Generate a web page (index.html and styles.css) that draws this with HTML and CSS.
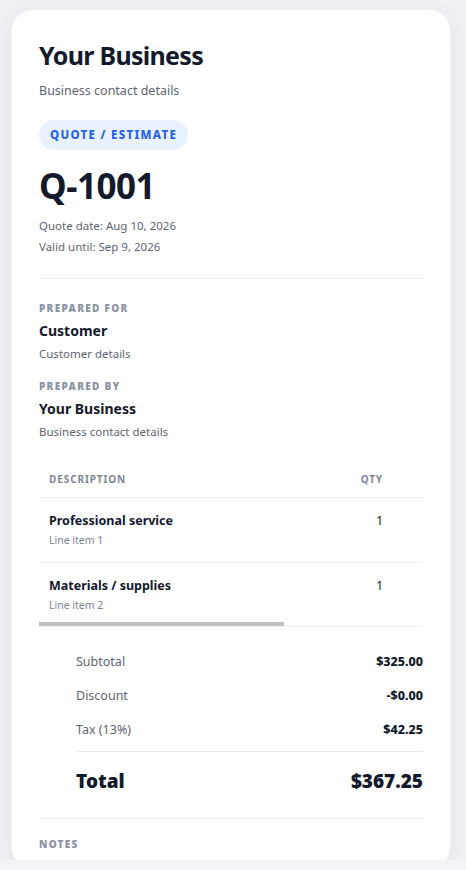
FILE: index.html
```html
<!DOCTYPE html>
<html lang="en">
<head>
    <meta charset="UTF-8">
    <meta name="viewport" content="width=device-width, initial-scale=1.0">
    <title>Quote Q-1001</title>
    <link rel="stylesheet" href="styles.css">
</head>
<body>
    <div class="page">
        <div class="sheet">
            <h1 class="biz-name">Your Business</h1>
            <p class="muted biz-contact">Business contact details</p>

            <span class="badge">Quote / Estimate</span>

            <div class="doc-number">Q-1001</div>
            <p class="meta">Quote date: Aug 10, 2026</p>
            <p class="meta">Valid until: Sep 9, 2026</p>

            <hr class="rule">

            <div class="party">
                <div class="label">Prepared for</div>
                <div class="party-name">Customer</div>
                <div class="muted small">Customer details</div>
            </div>
            <div class="party party-by">
                <div class="label">Prepared by</div>
                <div class="party-name">Your Business</div>
                <div class="muted small">Business contact details</div>
            </div>

            <div class="table-wrap">
                <table class="items">
                    <colgroup>
                        <col class="col-desc">
                        <col class="col-qty">
                        <col class="col-rest">
                    </colgroup>
                    <thead>
                        <tr>
                            <th>Description</th>
                            <th class="num">Qty</th>
                            <th></th>
                        </tr>
                    </thead>
                    <tbody>
                        <tr>
                            <td>
                                <div class="item-name">Professional service</div>
                                <div class="item-note">Line item 1</div>
                            </td>
                            <td class="num">1</td>
                            <td></td>
                        </tr>
                        <tr class="last">
                            <td>
                                <div class="item-name">Materials / supplies</div>
                                <div class="item-note">Line item 2</div>
                            </td>
                            <td class="num">1</td>
                            <td></td>
                        </tr>
                    </tbody>
                </table>
                <!-- horizontal scroll indicator, table is wider than the card -->
                <div class="scroll-track"><div class="scroll-thumb"></div></div>
            </div>

            <div class="totals">
                <div class="total-row"><span>Subtotal</span><b>$325.00</b></div>
                <div class="total-row"><span>Discount</span><b>-$0.00</b></div>
                <div class="total-row"><span>Tax (13%)</span><b>$42.25</b></div>
                <div class="grand-total"><span>Total</span><span>$367.25</span></div>
            </div>

            <hr class="rule notes-rule">
            <div class="label notes-label">Notes</div>
        </div>
    </div>
    <div class="bottom-bar"></div>
</body>
</html>
```

FILE: styles.css
```css
body {
    margin: 0;
    background: #eef0f4;
    font-family: "Noto Sans", "Open Sans", sans-serif;
    color: #131a2b;
}
.page {
    padding: 9px 15px 0 11px;
}
.sheet {
    background: #fff;
    border-radius: 22px;
    border: 1px solid #f0f1f4;
    box-shadow: 0 4px 18px rgba(15, 23, 42, 0.05);
    padding: 29px 27px 16px;
}
p {
    margin: 0;
}
.biz-name {
    margin: 0;
    font-size: 25px;
    line-height: 32px;
    font-weight: 700;
    letter-spacing: -0.7px;
}
.muted {
    color: #5e6574;
}
.biz-contact {
    margin-top: 10px;
    font-size: 12.5px;
    line-height: 20px;
}
.badge {
    display: inline-block;
    margin-top: 19px;
    height: 30px;
    line-height: 30px;
    padding: 0 11px;
    border-radius: 15px;
    background: #eaf1fe;
    color: #2563eb;
    font-size: 11.5px;
    font-weight: 800;
    letter-spacing: 1.3px;
    text-transform: uppercase;
}
.doc-number {
    margin-top: 14px;
    font-size: 35px;
    line-height: 44px;
    font-weight: 700;
    letter-spacing: -0.5px;
}
.meta {
    font-size: 11.5px;
    line-height: 21px;
    color: #5e6574;
}
.doc-number + .meta {
    margin-top: 7px;
}
.rule {
    border: 0;
    border-top: 1.5px solid #eef0f3;
    margin: 21px 0 0;
}
.party {
    margin-top: 21px;
}
.party-by {
    margin-top: 15px;
}
.label {
    font-size: 10px;
    line-height: 16px;
    font-weight: 900;
    letter-spacing: 1.3px;
    text-transform: uppercase;
    color: #8a93a4;
}
.party-name {
    margin-top: 5px;
    font-size: 14px;
    line-height: 20px;
    font-weight: 700;
}
.small {
    margin-top: 4px;
    font-size: 11.5px;
    line-height: 18px;
}
.table-wrap {
    margin-top: 20px;
}
.items {
    width: 100%;
    table-layout: fixed;
    border-collapse: collapse;
}
.col-desc {
    width: 294px;
}
.col-qty {
    width: 60px;
}
.items th {
    height: 36px;
    padding: 0 10px;
    text-align: left;
    font-size: 10px;
    font-weight: 700;
    letter-spacing: 0.9px;
    text-transform: uppercase;
    color: #7d8696;
    border-bottom: 1.5px solid #eef0f3;
}
.items td {
    padding: 14px 10px 14px;
    vertical-align: top;
    font-size: 12px;
    line-height: 18px;
    border-bottom: 1px solid #f1f2f5;
}
.items .last td {
    border-bottom: 0;
}
.items .num {
    text-align: right;
}
.item-name {
    font-size: 12.5px;
    font-weight: 700;
}
.item-note {
    margin-top: 2px;
    font-size: 10.5px;
    line-height: 16px;
    color: #7d8493;
}
.scroll-track {
    height: 4px;
    margin-top: -5px;
    border-bottom: 1px solid #f1f2f5;
}
.scroll-thumb {
    width: 245px;
    height: 4px;
    background: #c1c1c1;
}
.totals {
    margin: 17px 0 0 37px;
}
.total-row {
    display: flex;
    justify-content: space-between;
    align-items: center;
    height: 34px;
    font-size: 12.5px;
}
.total-row span {
    color: #5e6574;
}
.total-row b {
    font-weight: 800;
}
.grand-total {
    display: flex;
    justify-content: space-between;
    align-items: center;
    margin-top: 5px;
    padding-top: 11px;
    height: 36px;
    border-top: 1.5px solid #e9ebef;
    font-size: 19px;
    font-weight: 900;
}
.notes-rule {
    margin-top: 19px;
}
.notes-label {
    margin-top: 17px;
}
.bottom-bar {
    position: fixed;
    left: 0;
    right: 0;
    bottom: 0;
    height: 10px;
    background: #f3f4f8;
}
```
